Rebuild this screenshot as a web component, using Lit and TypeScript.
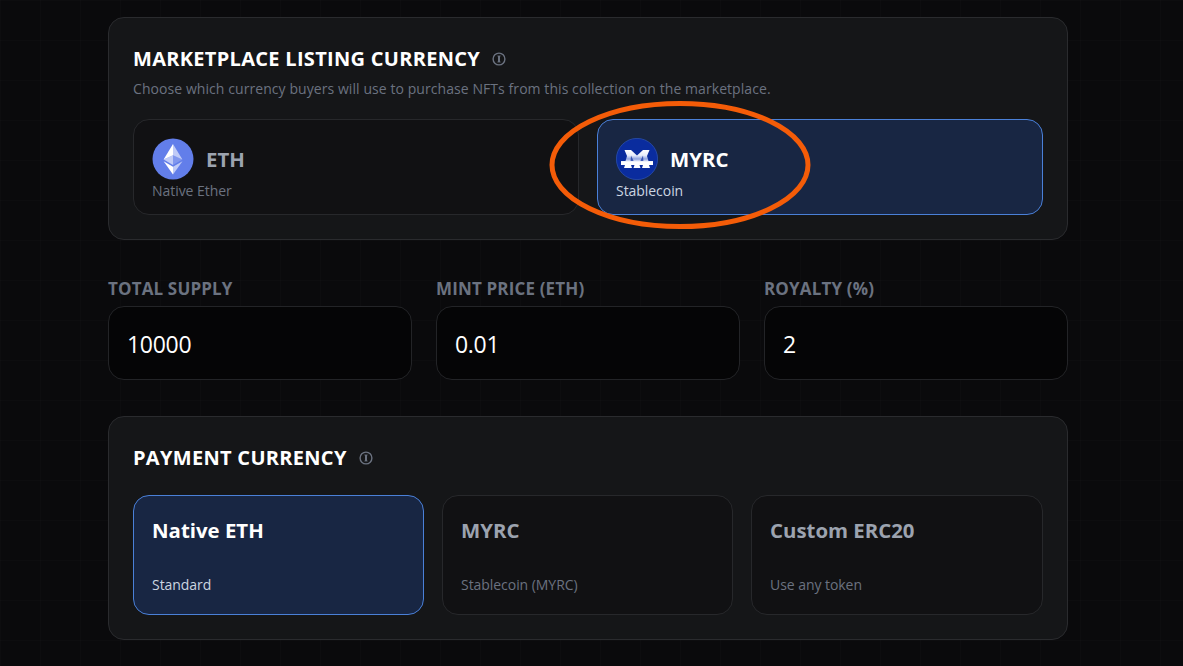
import { LitElement, html, css } from "lit";
import { customElement } from "lit/decorators.js";

const info = html`<svg class="info" viewBox="0 0 14 14" fill="none" stroke="currentColor">
  <circle cx="7" cy="7" r="5.9" stroke-width="1.4"></circle>
  <path d="M7 4v6" stroke-width="2"></path>
  <path d="M5.4 4h3.2M5.4 10h3.2" stroke-width="0.8"></path>
</svg>`;

const ethIcon = html`<svg class="coin" viewBox="0 0 42 42">
  <circle cx="21" cy="21" r="20.5" fill="#627eea"></circle>
  <path d="M21 6v11.2l9.4 4.2z" fill="#fff" fill-opacity=".6"></path>
  <path d="M21 6l-9.4 15.4 9.4-4.2z" fill="#fff"></path>
  <path d="M21 28.8v7.6l9.5-13.1z" fill="#fff" fill-opacity=".6"></path>
  <path d="M21 36.4v-7.6l-9.4-5.5z" fill="#fff"></path>
  <path d="M21 27l9.4-5.6-9.4-4.2z" fill="#fff" fill-opacity=".2"></path>
  <path d="M11.6 21.4L21 27v-9.8z" fill="#fff" fill-opacity=".6"></path>
</svg>`;

const myrcIcon = html`<svg class="coin" viewBox="0 0 42 42">
  <defs>
    <linearGradient id="mg" x1="0" y1="0" x2="0" y2="1">
      <stop offset="0" stop-color="#fff"></stop>
      <stop offset=".3" stop-color="#e8edfb"></stop>
      <stop offset=".5" stop-color="#8ea2de"></stop>
      <stop offset=".66" stop-color="#fff"></stop>
      <stop offset="1" stop-color="#fff"></stop>
    </linearGradient>
  </defs>
  <circle cx="21" cy="21" r="20.6" fill="#0a2c9e" stroke="#2a4fb0" stroke-width=".8"></circle>
  <path d="M8.5 12H15L21 17.5L27 12H33.5L31 18L32.5 23H37V27H33L34 30H26L27 27H23.5L24.5 30H17.5L18.5 27H15L16 30H8L9 27H5V23H9.5L11 18Z" fill="url(#mg)"></path>
  <path d="M15 17.5L17.6 23H14.6ZM27 17.5L27.4 23H24.4Z" fill="#0a2c9e" fill-opacity=".7"></path>
</svg>`;

@customElement("app-root")
export class AppRoot extends LitElement {
  static styles = css`
    :host {
      display: block;
      position: relative;
      height: 666px;
      overflow: hidden;
      background-color: #0a0a0c;
      background-image:
        linear-gradient(90deg, rgba(255, 255, 255, 0.012) 1px, transparent 1px),
        linear-gradient(rgba(255, 255, 255, 0.012) 1px, transparent 1px);
      background-size: 40px 40px;
      font-family: "Open Sans", "Noto Sans", sans-serif;
      color: #fff;
    }
    .page {
      width: 960px;
      margin-left: 108px;
      padding-top: 17px;
      display: flex;
      flex-direction: column;
    }
    .card {
      box-sizing: border-box;
      background: #151618;
      border: 1px solid #2a2b2e;
      border-radius: 16px;
      padding: 24px;
    }
    .card.top { height: 223px; }
    .card.bottom { height: 224px; margin-top: 36px; }
    .title {
      display: flex;
      align-items: center;
      gap: 12px;
      height: 36px;
      margin-top: -2px;
      font-size: 20px;
      font-weight: 700;
      letter-spacing: 0.3px;
    }
    .info { width: 14px; height: 14px; color: #6b7280; margin-top: 2px; }
    .desc {
      margin-top: 4px;
      font-size: 14px;
      line-height: 18px;
      color: #6b7280;
      letter-spacing: 0.07px;
      white-space: nowrap;
    }
    .two { display: grid; grid-template-columns: 446px 446px; gap: 18px; margin-top: 21px; }
    .three { display: grid; grid-template-columns: 291px 291px 292px; gap: 18px; margin-top: 20px; }
    .opt {
      box-sizing: border-box;
      background: #111113;
      border: 1px solid #27282b;
      border-radius: 16px;
      color: #9ca3af;
    }
    .opt.on { background: #182643; border-color: #4a80d8; color: #fff; }
    .two .opt { height: 96px; padding: 18px 18px 0; }
    .three .opt { height: 120px; padding: 20px 18px 0; }
    .head { display: flex; align-items: center; gap: 12px; height: 42px; }
    .coin { width: 42px; height: 42px; flex: none; }
    .name { font-size: 20.4px; font-weight: 700; }
    .sub { font-size: 14px; line-height: 20px; color: #6b7280; letter-spacing: -0.05px; }
    .opt.on .sub { color: #cbd5e1; }
    .two .sub { margin-top: 1px; }
    .three .name { line-height: 28px; }
    .three .sub { margin-top: 31px; }
    .fields { display: grid; grid-template-columns: repeat(3, 304px); gap: 24px; margin-top: 36px; }
    .label {
      height: 28px;
      margin-top: 2px;
      font-size: 17px;
      line-height: 22px;
      font-weight: 700;
      color: #6b7280;
      letter-spacing: 0.15px;
    }
    .input {
      box-sizing: border-box;
      height: 74px;
      display: flex;
      align-items: center;
      padding: 2px 18px 0;
      background: #050506;
      border: 1px solid #232427;
      border-radius: 16px;
      font-size: 23px;
      letter-spacing: -0.3px;
    }
    .ring {
      position: absolute;
      left: 545px;
      top: 98px;
      width: 270px;
      height: 135px;
      pointer-events: none;
    }
  `;

  render() {
    return html`
      <div class="page">
        <section class="card top">
          <div class="title">MARKETPLACE LISTING CURRENCY ${info}</div>
          <div class="desc">Choose which currency buyers will use to purchase NFTs from this collection on the marketplace.</div>
          <div class="two">
            <div class="opt">
              <div class="head">${ethIcon}<span class="name">ETH</span></div>
              <div class="sub">Native Ether</div>
            </div>
            <div class="opt on">
              <div class="head">${myrcIcon}<span class="name">MYRC</span></div>
              <div class="sub">Stablecoin</div>
            </div>
          </div>
        </section>
        <div class="fields">
          <div><div class="label">TOTAL SUPPLY</div><div class="input">10000</div></div>
          <div><div class="label">MINT PRICE (ETH)</div><div class="input">0.01</div></div>
          <div><div class="label">ROYALTY (%)</div><div class="input">2</div></div>
        </div>
        <section class="card bottom">
          <div class="title">PAYMENT CURRENCY ${info}</div>
          <div class="three">
            <div class="opt on"><div class="name">Native ETH</div><div class="sub">Standard</div></div>
            <div class="opt"><div class="name">MYRC</div><div class="sub">Stablecoin (MYRC)</div></div>
            <div class="opt"><div class="name">Custom ERC20</div><div class="sub">Use any token</div></div>
          </div>
        </section>
      </div>
      <svg class="ring" viewBox="0 0 270 135" fill="none">
        <ellipse cx="135" cy="67" rx="128" ry="61.5" stroke="#f45c08" stroke-width="5"></ellipse>
      </svg>
    `;
  }
}
